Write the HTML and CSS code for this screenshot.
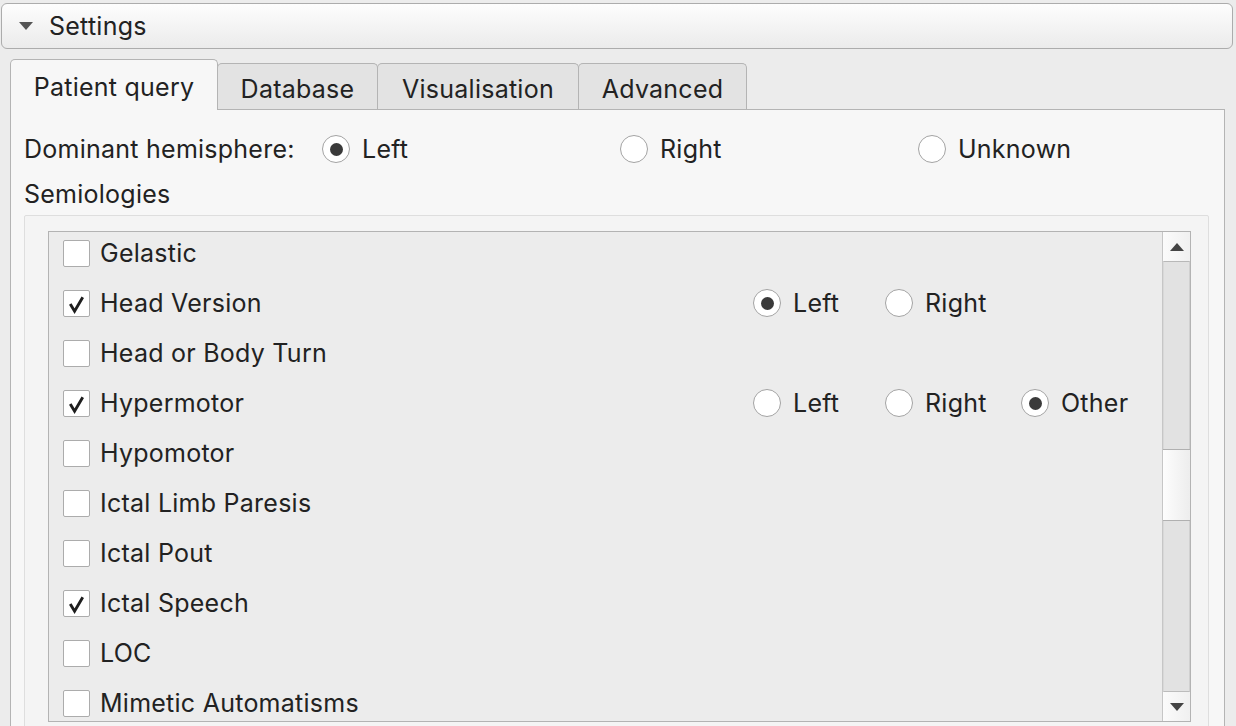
FILE: index.html
```html
<!DOCTYPE html>
<html>
<head>
<meta charset="utf-8">
<link rel="stylesheet" href="styles.css">
</head>
<body>
<div class="settings-header">
  <span class="tri-down"></span>
  <span class="settings-title">Settings</span>
</div>
<div class="tabbar">
  <div class="tab active">Patient query</div>
  <div class="tab">Database</div>
  <div class="tab">Visualisation</div>
  <div class="tab">Advanced</div>
</div>
<div class="panel">
  <div class="hemi-row">
    <div class="hemi-label">Dominant hemisphere:</div>
    <label class="hemi-opt"><span class="radio checked"></span>Left</label>
    <label class="hemi-opt"><span class="radio"></span>Right</label>
    <label class="hemi-opt last"><span class="radio"></span>Unknown</label>
  </div>
  <div class="section-title">Semiologies</div>
  <div class="groupbox">
    <div class="scrollarea">
      <div class="list">
        <div class="row"><span class="checkbox"></span><span class="label">Gelastic</span></div>
        <div class="row"><span class="checkbox checked"><svg viewBox="0 0 26 26"><path d="M6.5 13.5 L11 21 L19.5 6.5"/></svg></span><span class="label">Head Version</span>
          <div class="opts"><label class="opt w1"><span class="radio checked"></span>Left</label><label class="opt w2"><span class="radio"></span>Right</label></div></div>
        <div class="row"><span class="checkbox"></span><span class="label">Head or Body Turn</span></div>
        <div class="row"><span class="checkbox checked"><svg viewBox="0 0 26 26"><path d="M6.5 13.5 L11 21 L19.5 6.5"/></svg></span><span class="label">Hypermotor</span>
          <div class="opts"><label class="opt w1"><span class="radio"></span>Left</label><label class="opt w2"><span class="radio"></span>Right</label><label class="opt"><span class="radio checked"></span>Other</label></div></div>
        <div class="row"><span class="checkbox"></span><span class="label">Hypomotor</span></div>
        <div class="row"><span class="checkbox"></span><span class="label">Ictal Limb Paresis</span></div>
        <div class="row"><span class="checkbox"></span><span class="label">Ictal Pout</span></div>
        <div class="row"><span class="checkbox checked"><svg viewBox="0 0 26 26"><path d="M6.5 13.5 L11 21 L19.5 6.5"/></svg></span><span class="label">Ictal Speech</span></div>
        <div class="row"><span class="checkbox"></span><span class="label">LOC</span></div>
        <div class="row"><span class="checkbox"></span><span class="label">Mimetic Automatisms</span></div>
      </div>
      <div class="vscroll">
        <div class="sb-btn"><span class="tri-up"></span></div>
        <div class="sb-track top"></div>
        <div class="sb-thumb"></div>
        <div class="sb-track bottom"></div>
        <div class="sb-btn"><span class="tri-dn"></span></div>
      </div>
    </div>
  </div>
</div>
</body>
</html>
```
FILE: styles.css
```css
html, body {
  margin: 0;
  padding: 0;
  height: 726px;
  overflow: hidden;
}
body {
  background: #ececec;
  font-family: Inter, "Liberation Sans", sans-serif;
  font-size: 25px;
  letter-spacing: 0.25px;
  color: #222;
}
.settings-header {
  margin: 3px 3px 0 1px;
  height: 44px;
  border: 1px solid #acacac;
  border-radius: 6px;
  background: linear-gradient(#fdfdfd, #ebebeb);
  display: flex;
  align-items: center;
  padding-left: 17px;
}
.tri-down {
  width: 0;
  height: 0;
  border-left: 7px solid transparent;
  border-right: 7px solid transparent;
  border-top: 8px solid #555;
  margin-right: 16px;
}
.settings-title {
  color: #222;
}
.tabbar {
  display: flex;
  align-items: flex-end;
  margin: 10px 0 0 10px;
  height: 50px;
  position: relative;
  z-index: 1;
}
.tab {
  height: 46px;
  box-sizing: border-box;
  border: 1px solid #b4b4b4;
  border-bottom: none;
  border-radius: 5px 5px 0 0;
  background: #e3e3e3;
  display: flex;
  align-items: center;
  justify-content: center;
  margin-left: -1px;
  padding-top: 5px;
}
.tab:nth-child(2) { width: 161px; }
.tab:nth-child(3) { width: 202px; }
.tab:nth-child(4) { width: 169px; }
.tab.active {
  width: 208px;
  height: 51px;
  margin-left: 0;
  background: #f7f7f7;
  margin-bottom: -1px;
  padding-top: 3px;
}
.panel {
  margin: 0 11px 0 10px;
  border: 1px solid #b4b4b4;
  background: #f7f7f7;
  height: 700px;
  box-sizing: border-box;
  padding: 0 15px 0 13px;
}
.hemi-row {
  display: flex;
  align-items: center;
  height: 40px;
  margin-top: 19px;
}
.hemi-label {
  width: 298px;
  flex: none;
}
.hemi-opt {
  width: 298px;
  flex: none;
  display: flex;
  align-items: center;
}
.hemi-opt.last {
  width: auto;
}
.radio {
  width: 26px;
  height: 26px;
  border-radius: 50%;
  border: 1.5px solid #a3a3a3;
  background: #fff;
  margin-right: 12px;
  position: relative;
  flex: none;
}
.radio.checked::after {
  content: "";
  position: absolute;
  left: 6.5px;
  top: 6.5px;
  width: 13px;
  height: 13px;
  border-radius: 50%;
  background: #3a3a3a;
}
.section-title {
  height: 30px;
  display: flex;
  align-items: center;
  margin-top: 10px;
}
.groupbox {
  margin-top: 6px;
  border: 1px solid #dedede;
  border-radius: 2px;
  background: #f4f4f4;
  padding: 15px 17px 20px 23px;
  height: 560px;
  box-sizing: border-box;
}
.scrollarea {
  border: 1px solid #b3b3b3;
  background: #ececec;
  display: flex;
  height: 491px;
  box-sizing: border-box;
}
.list {
  flex: 1;
  display: flex;
  flex-direction: column;
  gap: 10px;
  padding-top: 1px;
  overflow: hidden;
}
.row {
  height: 40px;
  flex: none;
  display: flex;
  align-items: center;
  padding-left: 14px;
}
.checkbox {
  width: 25px;
  height: 25px;
  border: 1.5px solid #acacac;
  border-radius: 2px;
  background: #fff;
  flex: none;
  margin-right: 10px;
  display: flex;
}
.checkbox svg {
  width: 25px;
  height: 25px;
}
.checkbox svg path {
  fill: none;
  stroke: #1e1e1e;
  stroke-width: 3;
  stroke-linejoin: miter;
}
.label {
  width: 653px;
  flex: none;
}
.opts {
  display: flex;
  align-items: center;
}
.opt {
  display: flex;
  align-items: center;
  flex: none;
}
.opt.w1 { width: 132px; }
.opt.w2 { width: 136px; }
.vscroll {
  width: 27px;
  display: flex;
  flex-direction: column;
  border-left: 1px solid #c6c6c6;
  flex: none;
}
.sb-btn {
  height: 29px;
  background: linear-gradient(90deg, #fbfbfb, #f0f0f0);
  display: flex;
  align-items: center;
  justify-content: center;
  flex: none;
}
.tri-up {
  width: 0; height: 0;
  border-left: 7px solid transparent;
  border-right: 7px solid transparent;
  border-bottom: 8px solid #444;
}
.tri-dn {
  width: 0; height: 0;
  border-left: 7px solid transparent;
  border-right: 7px solid transparent;
  border-top: 8px solid #444;
}
.sb-track {
  background: #e2e2e2;
  border-right: 1px solid #d0d0d0;
  border-left: 1px solid #d8d8d8;
}
.sb-track.top {
  height: 187px;
  border-top: 1px solid #b8b8b8;
}
.sb-track.bottom {
  flex: 1;
  border-bottom: 1px solid #bcbcbc;
}
.sb-thumb {
  height: 72px;
  box-sizing: border-box;
  border-top: 1px solid #b0b0b0;
  border-bottom: 1px solid #b0b0b0;
  background: linear-gradient(90deg, #fdfdfd, #ededed);
}
```
